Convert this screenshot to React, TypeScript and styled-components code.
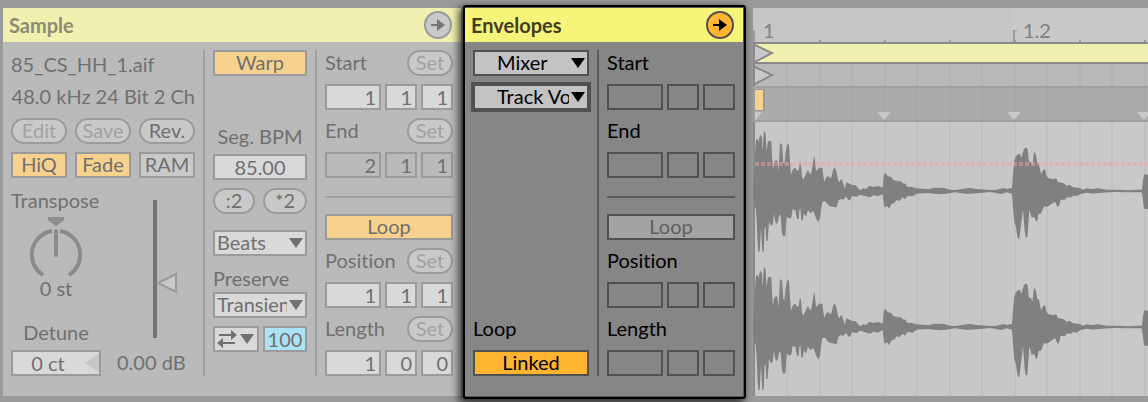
import React, { useId } from "react";
import styled, { createGlobalStyle, ThemeProvider } from "styled-components";

const sampleTheme = {
  surface: "#bababa",
  title: "#f0f0b0",
  titleText: "#8c8c74",
  text: "#707070",
  faint: "#a1a1a1",
  border: "#9b9b9b",
  rule: "#a0a0a0",
  field: "#d9d9d9",
  fieldOff: "#bababa",
  button: "#c9c9c9",
  on: "#f7d18e",
  icon: "#767676",
  round: "#c9c9c9",
};

const envelopeTheme = {
  surface: "#868686",
  title: "#f7f47a",
  titleText: "#3f3e20",
  text: "#000000",
  faint: "#5e5e5e",
  border: "#515151",
  rule: "#5a5a5a",
  field: "#c3c3c3",
  fieldOff: "#868686",
  button: "#a3a3a3",
  on: "#ffb532",
  icon: "#000000",
  round: "#ffb532",
};

const GlobalStyle = createGlobalStyle`
  * { box-sizing: border-box; }
  body {
    margin: 0;
    background: #9a9a9a;
    font-family: Lato, "Open Sans", sans-serif;
    font-size: 20px;
    font-variant-ligatures: none;
    line-height: 24px;
  }
  button, input, select { font: inherit; font-variant-ligatures: none; margin: 0; }
`;

const Page = styled.main`
  display: flex;
  padding: 8px 0 6px 3px;
  min-height: 100vh;
  align-items: flex-start;
  overflow: hidden;
`;

const Strip = styled.div`
  display: flex;
  flex: 1;
  min-width: 0;
`;

const Panel = styled.section`
  flex: none;
  display: flex;
  flex-direction: column;
  background: ${(p) => p.theme.surface};
  color: ${(p) => p.theme.text};
`;

const FocusPanel = styled(Panel)`
  z-index: 1;
  margin: -3px 7px -3px 2px;
  border: 2px solid #000;
  border-radius: 3px;
  padding: 1px 1px 1px 0;
  background: #5a5a5a;
  box-shadow: -3px 3px 9px 1px rgba(0, 0, 0, 0.75);
`;

const TitleBar = styled.header`
  display: flex;
  align-items: center;
  justify-content: space-between;
  height: 34px;
  padding: 0 9px 0 6px;
  background: ${(p) => p.theme.title};
`;

const Title = styled.h2`
  margin: 0;
  font-size: 20px;
  font-weight: 700;
  color: ${(p) => p.theme.titleText};
`;

const RoundButton = styled.button`
  display: grid;
  place-items: center;
  width: 28px;
  height: 28px;
  padding: 0;
  border: 2px solid ${(p) => p.theme.border};
  border-radius: 50%;
  background: ${(p) => p.theme.round};
  color: ${(p) => p.theme.icon};
`;

const Columns = styled.div`
  display: flex;
  flex: 1;
  gap: 8px;
  padding: 8px 8px 20px;
  background: ${(p) => p.theme.surface};
`;

const Column = styled.div<{ $width: number; $gap?: number }>`
  display: flex;
  flex-direction: column;
  gap: ${(p) => p.$gap ?? 8}px;
  width: ${(p) => p.$width}px;
`;

const Separator = styled.div`
  width: 2px;
  background: ${(p) => p.theme.rule};
`;

const Rule = styled.hr`
  width: 100%;
  height: 2px;
  margin: 10px 0 8px;
  border: 0;
  background: ${(p) => p.theme.rule};
`;

const Row = styled.div<{ $gap?: number }>`
  display: flex;
  align-items: center;
  justify-content: space-between;
  gap: ${(p) => p.$gap ?? 8}px;
  min-height: 26px;
`;

const Text = styled.div<{ $align?: string }>`
  height: 26px;
  white-space: nowrap;
  text-align: ${(p) => p.$align ?? "left"};
`;

const FileName = styled(Text)`
  padding-top: 2px;
`;

const Label = styled.label<{ $align?: string }>`
  height: 26px;
  white-space: nowrap;
  text-align: ${(p) => p.$align ?? "left"};
`;

const Button = styled.button<{ $on?: boolean; $faint?: boolean; $width?: number }>`
  height: 26px;
  width: ${(p) => (p.$width ? `${p.$width}px` : "100%")};
  padding: 0 0 2px;
  border: 2px solid ${(p) => p.theme.border};
  background: ${(p) => (p.$on ? p.theme.on : p.theme.button)};
  color: ${(p) => (p.$faint ? p.theme.faint : p.theme.text)};
  line-height: 20px;
  white-space: nowrap;
`;

const PillButton = styled(Button)`
  border-radius: 13px;
`;

const Field = styled.input<{ $off?: boolean; $width?: number; $align?: string; $fill?: string }>`
  height: 26px;
  width: ${(p) => (p.$width ? `${p.$width}px` : "100%")};
  padding: 0 ${(p) => (p.$align ? 0 : 3)}px 1px 0;
  border: 2px solid ${(p) => p.theme.border};
  border-radius: 0;
  outline: 0;
  background: ${(p) => p.$fill ?? (p.$off ? p.theme.fieldOff : p.theme.field)};
  color: ${(p) => p.theme.text};
  text-align: ${(p) => p.$align ?? "right"};
`;

const Stack = styled.div`
  display: grid;
  align-items: center;
  > * { grid-area: 1 / 1; }
  > svg { pointer-events: none; }
`;

const StackEnd = styled(Stack)`
  > svg { justify-self: end; margin-right: 4px; }
`;

const DetuneBox = styled(Stack)`
  width: 90px;
  > svg { justify-self: end; margin-right: 2px; }
  > input { padding-right: 16px; }
`;

const Select = styled.select<{ $indent: number; $focus?: boolean }>`
  appearance: none;
  width: 100%;
  height: 26px;
  padding: 0 18px 2px ${(p) => p.$indent}px;
  border: 2px solid ${(p) => p.theme.border};
  border-radius: 0;
  outline: 0;
  background: ${(p) => p.theme.field};
  color: ${(p) => p.theme.text};
  line-height: 20px;
  box-shadow: ${(p) => (p.$focus ? `0 0 0 2px ${p.theme.border}` : "none")};
`;

const ModeButton = styled(Button)`
  display: flex;
  align-items: center;
  justify-content: space-between;
  padding: 0 3px 0 2px;
  background: ${(p) => p.theme.field};
`;

const HiddenRange = styled.input`
  width: 100%;
  height: 100%;
  opacity: 0;
`;

const TallRange = styled(HiddenRange)`
  writing-mode: vertical-lr;
`;

const PitchArea = styled.div`
  display: flex;
  justify-content: space-between;
`;

const PitchSide = styled.div`
  display: flex;
  flex-direction: column;
  width: 90px;
`;

const TransposeLabel = styled(Label)`
  padding-top: 2px;
`;

const KnobValue = styled(Text)`
  margin-bottom: 18px;
`;

const DetuneLabel = styled(Label)`
  margin-bottom: 4px;
`;

const GainSide = styled.div`
  display: flex;
  flex-direction: column;
  justify-content: space-between;
  width: 78px;
  padding-top: 14px;
`;

const GainSlider = styled(Stack)`
  width: 24px;
  height: 138px;
  margin-left: 36px;
`;

const Spaced = styled.div<{ $top: number }>`
  display: flex;
  flex-direction: column;
  margin-top: ${(p) => p.$top}px;
`;

const TempoGroup = styled(Spaced)`
  gap: 4px;
`;

const Filler = styled.div`
  flex: 1;
`;

const WaveView = styled.section`
  display: flex;
  flex: 1;
  flex-direction: column;
  min-width: 0;
  background: #c7c7c7;
  color: #767676;
  svg { display: block; width: 100%; }
`;

const Lane = styled.div<{ $height: number; $fill: string; $line: string }>`
  height: ${(p) => p.$height}px;
  overflow: hidden;
  background: ${(p) => p.$fill};
  border-bottom: 2px solid ${(p) => p.$line};
`;

const RulerLane = styled(Lane)`
  svg text { font-size: 20px; fill: #808080; }
`;

const WaveLane = styled.div`
  flex: 1;
  height: 274px;
  overflow: hidden;
`;

const DownArrow = () => (
  <svg width="14" height="10" viewBox="0 0 14 10" fill="currentColor">
    <path d="M0 0H14L7 10Z" />
  </svg>
);

const ArrowIcon = () => (
  <svg width="14" height="12" viewBox="0 0 14 12" fill="currentColor">
    <path d="M0 5H6V0L14 6L6 12V7H0Z" />
  </svg>
);

const SwapIcon = () => (
  <svg width="20" height="18" viewBox="0 0 20 18" fill="currentColor">
    <path d="M2 4H14V0L20 5L14 10V6H2Z" />
    <path d="M18 12H6V8L0 13L6 18V14H18Z" />
  </svg>
);

function Dropdown(props: { label: string; value: string; indent: number; id?: string; focus?: boolean }) {
  return (
    <StackEnd>
      <Select id={props.id} aria-label={props.label} $indent={props.indent} $focus={props.focus}>
        <option>{props.value}</option>
      </Select>
      <DownArrow />
    </StackEnd>
  );
}

function Position(props: { label: string; values?: string[]; off?: boolean }) {
  const id = useId();
  const values = props.values ?? ["", "", ""];
  const units = ["bar", "beat", "sixteenth"];
  return (
    <>
      <Row>
        <Label htmlFor={id}>{props.label}</Label>
        {props.values && (
          <PillButton $width={46} $faint>
            Set
          </PillButton>
        )}
      </Row>
      <Row $gap={4}>
        {values.map((v, i) => (
          <Field
            key={units[i]}
            id={i === 0 ? id : undefined}
            aria-label={`${props.label} ${units[i]}`}
            $width={i === 0 ? 56 : 32}
            $off={props.off || !props.values}
            defaultValue={v}
          />
        ))}
      </Row>
    </>
  );
}

function LoopColumn(props: { values?: string[][] }) {
  const v = props.values ?? [];
  return (
    <Column $width={128}>
      <Position label="Start" values={v[0]} />
      <Position label="End" values={v[1]} off />
      <Rule />
      <Button $on={!!props.values} $faint={!props.values} aria-pressed={!!props.values}>
        Loop
      </Button>
      <Position label="Position" values={v[2]} />
      <Position label="Length" values={v[3]} />
    </Column>
  );
}

function SamplePanel() {
  return (
    <Panel>
      <TitleBar>
        <Title>Sample</Title>
        <RoundButton aria-label="Show sample box">
          <ArrowIcon />
        </RoundButton>
      </TitleBar>
      <Columns>
        <Column $width={184}>
          <FileName>85_CS_HH_1.aif</FileName>
          <Text $align="right">48.0 kHz 24 Bit 2 Ch</Text>
          <Row>
            <PillButton $faint>Edit</PillButton>
            <PillButton $faint>Save</PillButton>
            <PillButton>Rev.</PillButton>
          </Row>
          <Row>
            <Button $on aria-pressed>HiQ</Button>
            <Button $on aria-pressed>Fade</Button>
            <Button>RAM</Button>
          </Row>
          <PitchArea>
            <PitchSide>
              <TransposeLabel htmlFor="transpose">Transpose</TransposeLabel>
              <Stack>
                <svg width="90" height="64" viewBox="0 0 90 64">
                  <path d="M37 5H53V8L45 14L37 8Z" fill="#8b8b8b" />
                  <path d="M41 19A24 24 0 0 0 32 63" fill="none" stroke="#8b8b8b" strokeWidth="4" />
                  <path d="M49 19A24 24 0 0 1 58 63" fill="none" stroke="#8b8b8b" strokeWidth="4" />
                  <path d="M45 19V43" stroke="#8b8b8b" strokeWidth="4" strokeLinecap="round" />
                </svg>
                <HiddenRange id="transpose" type="range" min={-48} max={48} defaultValue={0} />
              </Stack>
              <KnobValue $align="center">0 st</KnobValue>
              <DetuneLabel htmlFor="detune" $align="center">Detune</DetuneLabel>
              <DetuneBox>
                <Field id="detune" $align="center" defaultValue="0 ct" />
                <svg width="14" height="18" viewBox="0 0 14 18">
                  <path d="M14 0V18L0 9Z" fill="#c6c6c6" />
                </svg>
              </DetuneBox>
            </PitchSide>
            <GainSide>
              <GainSlider>
                <svg width="24" height="138" viewBox="0 0 24 138">
                  <path d="M2 0V138" stroke="#747474" strokeWidth="4" />
                  <path d="M5 83L23 74V92Z" fill="#c9c9c9" stroke="#9b9b9b" strokeWidth="2" />
                </svg>
                <TallRange type="range" aria-label="Gain" />
              </GainSlider>
              <Text>0.00 dB</Text>
            </GainSide>
          </PitchArea>
        </Column>
        <Separator />
        <Column $width={94}>
          <Button $on aria-pressed>Warp</Button>
          <TempoGroup $top={40}>
            <Label htmlFor="bpm" $align="center">Seg. BPM</Label>
            <Field id="bpm" $align="center" defaultValue="85.00" />
          </TempoGroup>
          <Row>
            <PillButton $width={42}>:2</PillButton>
            <PillButton $width={44}>*2</PillButton>
          </Row>
          <Spaced $top={8}>
            <Dropdown label="Warp mode" value="Beats" indent={2} />
          </Spaced>
          <Spaced $top={2}>
            <Label htmlFor="preserve">Preserve</Label>
            <Dropdown id="preserve" label="Preserve" value="Transients" indent={2} />
          </Spaced>
          <Row $gap={4}>
            <ModeButton $width={46} aria-haspopup="listbox" aria-label="Transient loop mode">
              <SwapIcon />
              <DownArrow />
            </ModeButton>
            <Field aria-label="Transient envelope" $fill="#ace2f5" $align="center" $width={44} defaultValue="100" />
          </Row>
        </Column>
        <Separator />
        <LoopColumn
          values={[
            ["1", "1", "1"],
            ["2", "1", "1"],
            ["1", "1", "1"],
            ["1", "0", "0"],
          ]}
        />
      </Columns>
    </Panel>
  );
}

function EnvelopesPanel() {
  return (
    <FocusPanel>
      <TitleBar>
        <Title>Envelopes</Title>
        <RoundButton aria-label="Show envelopes box">
          <ArrowIcon />
        </RoundButton>
      </TitleBar>
      <Columns>
        <Column $width={116}>
          <Dropdown label="Device" value="Mixer" indent={22} />
          <Dropdown label="Control" value="Track Volume" indent={22} focus />
          <Filler />
          <Text>Loop</Text>
          <Button $on aria-pressed>Linked</Button>
        </Column>
        <Separator />
        <LoopColumn />
      </Columns>
    </FocusPanel>
  );
}

/* Waveform outline, three units to the pixel: [x, distance from the centre line]. */
const crest: [number, number][] = [
  [0, 20], [3, 53], [5, 95], [9, 154], [13, 157], [17, 148], [20, 164], [23, 169], [27, 162], [29, 120],
  [32, 174], [35, 180], [38, 172], [41, 120], [45, 148], [48, 151], [55, 150], [57, 105], [60, 62], [63, 86],
  [69, 93], [73, 90], [76, 60], [79, 100], [81, 144], [87, 138], [91, 85], [94, 80], [98, 115], [102, 138],
  [108, 142], [111, 90], [114, 48], [120, 66], [127, 70], [133, 60], [137, 62], [141, 90], [144, 80],
  [147, 44], [151, 34], [156, 45], [165, 64], [170, 50], [175, 55], [180, 85], [183, 106], [186, 92],
  [189, 60], [199, 70], [208, 70], [211, 45], [214, 28], [219, 40], [225, 45], [232, 38], [236, 44],
  [241, 67], [246, 69], [251, 58], [254, 38], [258, 26], [266, 37], [270, 25], [275, 6], [280, 26],
  [290, 22], [300, 17], [308, 18], [317, 5], [324, 3], [331, 9], [338, 5], [346, 13], [351, 16],
  [359, 12], [370, 14], [381, 14], [389, 9], [392, 45], [396, 55], [405, 44], [416, 42], [420, 33],
  [431, 31], [436, 28], [443, 31], [449, 23], [457, 22], [463, 13], [476, 12], [489, 8], [510, 7],
  [526, 5], [541, 9], [561, 10], [571, 10], [591, 4], [606, 3], [631, 7], [651, 9], [671, 6],
  [711, 3], [731, 4], [751, 9], [761, 6], [777, 9], [780, 50], [784, 90], [789, 104], [795, 110],
  [801, 111], [806, 100], [812, 124], [817, 130], [822, 130], [825, 117], [828, 87], [834, 88],
  [838, 75], [843, 116], [847, 114], [850, 102], [853, 84], [858, 82], [864, 50], [869, 60], [873, 66],
  [877, 64], [880, 47], [885, 39], [902, 35], [909, 39], [915, 27], [931, 24], [941, 16], [951, 18],
  [961, 11], [981, 9], [989, 4], [1001, 8], [1016, 6], [1036, 8], [1061, 4], [1091, 4], [1131, 2],
  [1151, 4], [1167, 4], [1170, 32], [1174, 50], [1185, 48], [1210, 40], [1240, 28], [1300, 12],
  [1400, 5], [1700, 3],
];

const trough: [number, number][] = [
  [0, 17], [4, 52], [8, 50], [11, 90], [14, 160], [16, 182], [20, 182], [24, 112], [28, 182], [32, 182],
  [35, 112], [38, 108], [40, 150], [44, 150], [48, 92], [54, 105], [59, 100], [63, 68], [66, 90],
  [70, 99], [75, 92], [79, 70], [83, 75], [87, 127], [91, 135], [97, 134], [101, 77], [111, 83],
  [115, 79], [119, 55], [127, 58], [132, 83], [137, 84], [139, 58], [142, 52], [145, 87], [149, 89],
  [153, 67], [159, 77], [165, 58], [173, 67], [181, 60], [189, 82], [196, 94], [201, 82], [205, 50],
  [208, 32], [216, 31], [226, 43], [236, 47], [251, 49], [257, 27], [267, 23], [271, 27], [279, 16],
  [286, 28], [292, 27], [297, 15], [311, 17], [321, 11], [336, 15], [351, 19], [361, 13], [375, 16],
  [389, 9], [392, 35], [395, 50], [402, 44], [408, 53], [416, 38], [423, 37], [431, 27], [439, 30],
  [449, 19], [456, 25], [464, 14], [479, 16], [491, 8], [521, 6], [541, 8], [561, 10], [581, 8],
  [606, 4], [641, 9], [681, 6], [711, 3], [746, 9], [761, 4], [777, 8], [780, 48], [784, 93],
  [789, 108], [794, 142], [799, 144], [806, 88], [810, 56], [815, 118], [818, 139], [823, 139],
  [826, 100], [829, 56], [836, 80], [844, 78], [849, 91], [853, 90], [857, 68], [864, 68], [873, 46],
  [881, 48], [891, 42], [906, 32], [914, 48], [918, 46], [923, 26], [936, 26], [943, 18], [951, 20],
  [961, 14], [971, 16], [981, 10], [1001, 5], [1021, 8], [1036, 6], [1081, 3], [1121, 4], [1166, 4],
  [1169, 18], [1173, 53], [1185, 55], [1210, 40], [1240, 24], [1300, 12], [1400, 5], [1700, 3],
];

function outline(center: number, depth: number) {
  const top = crest.map(([x, h]) => `${x},${center * 3 - h}`);
  const bottom = trough.map(([x, h]) => `${x},${Math.round(center * 3 + h * depth)}`).reverse();
  return `M${top.join("L")}L${bottom.join("L")}Z`;
}

/* Grid line centres; odd entries also get a tick in the ruler. */
const gridX = Array.from({ length: 48 }, (_, i) => 33 + Math.round((i * 325) / 10));

const GridLines = ({ color, height }: { color: string; height: number }) => (
  <g fill={color}>
    {gridX.map((x) => (
      <rect key={x} x={x} y="0" width="2" height={height} />
    ))}
  </g>
);

const Flag = () => (
  <path d="M2 1L19 9L2 18" fill="#c9c9c9" stroke="#8b8b8b" strokeWidth="2" />
);

function Waveform() {
  return (
    <WaveView aria-label="Sample display">
      <RulerLane $height={36} $fill="#c6c6c6" $line="#8a8a8a">
        <svg height="34">
          <rect x="260" y="0" width="100%" height="34" fill="#c9c9c9" />
          <g fill="#9b9b9b">
            <rect x="0" y="22" width="2" height="12" />
            <rect x="260" y="22" width="2" height="12" />
            <rect x="262" y="22" width="2" height="1" />
            {gridX.filter((_, i) => i % 2 === 1).map((x) => (
              <rect key={x} x={x} y="32" width="2" height="2" />
            ))}
          </g>
          <text x="10" y="30">1</text>
          <text x="270" y="30">1.2</text>
        </svg>
      </RulerLane>
      <Lane $height={20} $fill="#f0f0b0" $line="#8a8a8a">
        <svg height="18">
          <rect x="0" y="0" width="2" height="18" fill="#8a8a8a" />
          <Flag />
        </svg>
      </Lane>
      <Lane $height={24} $fill="#b9b9b9" $line="#a0a0a0">
        <svg height="22">
          <GridLines color="#b3b3b3" height={22} />
          <rect x="0" y="0" width="2" height="22" fill="#8a8a8a" />
          <g transform="translate(0 2)">
            <Flag />
          </g>
        </svg>
      </Lane>
      <Lane $height={34} $fill="#ababab" $line="#a0a0a0">
        <svg height="32">
          <GridLines color="#a8a8a8" height={32} />
          <rect x="0" y="0" width="2" height="32" fill="#9b9b9b" />
          <rect x="2" y="1" width="10" height="22" fill="#9b9b9b" />
          <rect x="2" y="2" width="8" height="20" fill="#f7d18e" />
          <path d="M2 24H9L3 32H2Z" fill="#c9c9c9" />
          {[131, 261, 391, 521, 651, 781].map((x) => (
            <path key={x} d={`M${x - 7} 24H${x + 7}L${x} 32Z`} fill="#c9c9c9" />
          ))}
        </svg>
      </Lane>
      <WaveLane>
        <svg height="274">
          <rect x="260" y="0" width="100%" height="274" fill="#c9c9c9" />
          <GridLines color="#c0c0c0" height={274} />
          <rect x="0" y="0" width="2" height="274" fill="#8b8b8b" />
          <g transform="scale(0.3333)" fill="#808080">
            <path d={outline(69, 1)} />
            <path d={outline(205, 1.04)} />
          </g>
          <line x1="2" x2="100%" y1="42" y2="42" stroke="#f4a09b" strokeOpacity="0.5" strokeWidth="4" strokeDasharray="4 2" />
        </svg>
      </WaveLane>
    </WaveView>
  );
}

export default function App() {
  return (
    <>
      <GlobalStyle />
      <Page>
        <Strip>
          <ThemeProvider theme={sampleTheme}>
            <SamplePanel />
          </ThemeProvider>
          <ThemeProvider theme={envelopeTheme}>
            <EnvelopesPanel />
          </ThemeProvider>
          <Waveform />
        </Strip>
      </Page>
    </>
  );
}
